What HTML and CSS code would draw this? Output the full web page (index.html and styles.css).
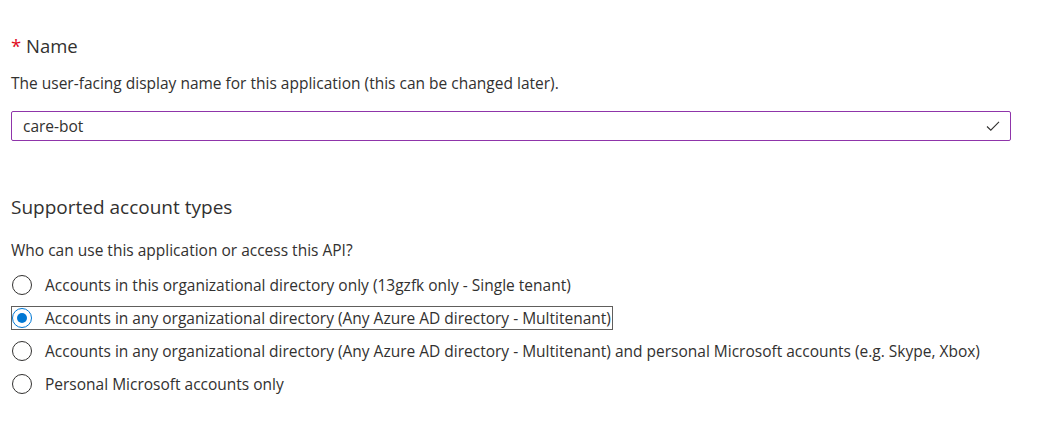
FILE: index.html
```html
<!DOCTYPE html>
<html>
<head>
<meta charset="utf-8">
<link rel="stylesheet" href="styles.css">
</head>
<body>
<div class="page">
  <div class="label"><span class="req">*</span> Name</div>
  <div class="desc">The user-facing display name for this application (this can be changed later).</div>
  <div class="input">
    <span class="value">care-bot</span>
    <svg class="check" width="14" height="12" viewBox="0 0 14 12"><path d="M1 6.5 L4.8 10.2 L13 1.8" fill="none" stroke="#323130" stroke-width="1.1"/></svg>
  </div>
  <div class="heading">Supported account types</div>
  <div class="question">Who can use this application or access this API?</div>
  <div class="radios">
    <div class="row"><span class="circle"></span><span class="text">Accounts in this organizational directory only (13gzfk only - Single tenant)</span></div>
    <div class="row selected"><span class="circle on"></span><span class="text">Accounts in any organizational directory (Any Azure AD directory - Multitenant)</span></div>
    <div class="row"><span class="circle"></span><span class="text">Accounts in any organizational directory (Any Azure AD directory - Multitenant) and personal Microsoft accounts (e.g. Skype, Xbox)</span></div>
    <div class="row"><span class="circle"></span><span class="text">Personal Microsoft accounts only</span></div>
  </div>
</div>
</body>
</html>
```
FILE: styles.css
```css
html, body {
  margin: 0;
  padding: 0;
  background: #ffffff;
}
body {
  font-family: "Open Sans", "Noto Sans", sans-serif;
  color: #323130;
  font-size: 15.5px;
}
.page {
  padding: 32px 32px 0 11px;
  width: 1000px;
}
.label {
  font-size: 18.5px;
  line-height: 28px;
  height: 28px;
}
.req {
  color: #e00b1c;
}
.desc {
  margin-top: 13px;
  line-height: 20px;
}
.input {
  margin-top: 18px;
  box-sizing: border-box;
  width: 1000px;
  height: 30px;
  border: 1px solid #8f35aa;
  border-radius: 2px;
  display: flex;
  align-items: center;
  justify-content: space-between;
  padding: 0 10px 0 11px;
}
.check {
  display: block;
}
.heading {
  margin-top: 52px;
  font-size: 19px;
  line-height: 28px;
  font-weight: 400;
}
.question {
  margin-top: 19px;
  line-height: 20px;
}
.radios {
  margin-top: 13px;
  display: flex;
  flex-direction: column;
  align-items: flex-start;
  gap: 9px;
}
.row {
  box-sizing: border-box;
  height: 24px;
  display: inline-flex;
  align-items: center;
  gap: 13px;
  border: 1px solid transparent;
  padding-right: 1px;
}
.row.selected {
  border-color: #605e5c;
}
.circle {
  box-sizing: border-box;
  width: 20px;
  height: 20px;
  border-radius: 50%;
  border: 1px solid #323130;
  flex: none;
  position: relative;
}
.circle.on {
  border-color: #0078d4;
}
.circle.on::after {
  content: "";
  position: absolute;
  left: 4px;
  top: 4px;
  width: 10px;
  height: 10px;
  border-radius: 50%;
  background: #0078d4;
}
.text {
  line-height: 20px;
}
```
